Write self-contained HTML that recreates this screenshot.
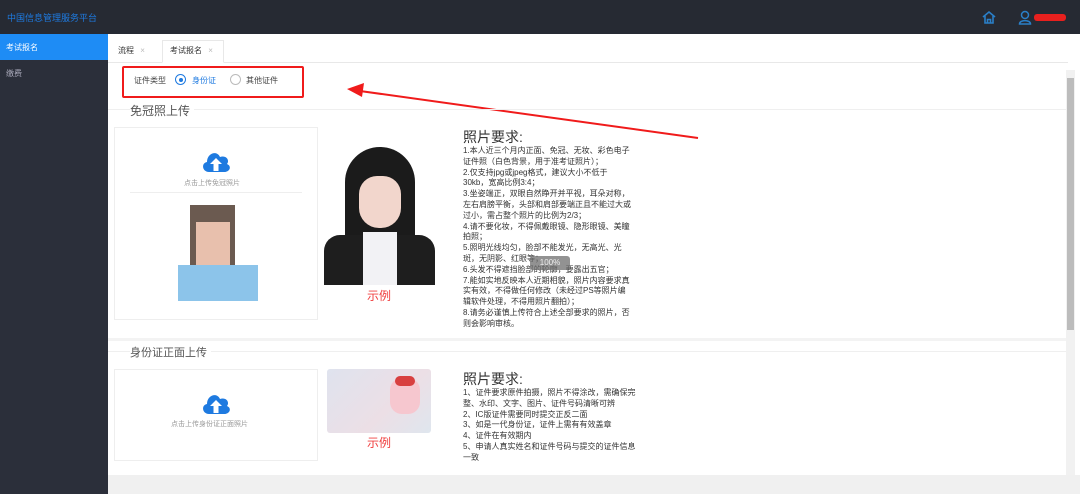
<!DOCTYPE html>
<html><head><meta charset="utf-8"><style>
*{margin:0;padding:0;box-sizing:border-box}
body{width:1080px;height:494px;overflow:hidden;background:#fff;font-family:"Liberation Sans","Noto Sans CJK SC",sans-serif;position:relative}
.a{position:absolute}
.req{font-size:8px;line-height:10.8px;color:#333}
.req h4{font-size:14px;font-weight:normal;line-height:17px;color:#333}
</style></head><body>
<div class="a" style="left:0;top:0;width:1080px;height:34px;background:#262a33"></div>
<div class="a" style="left:7px;top:11px;font-size:9px;color:#1e7ae0">中国信息管理服务平台</div>
<svg class="a" style="left:981px;top:10px" width="16" height="15" viewBox="0 0 16 15"><path d="M2 7 L8 2 L14 7 M4 6 V13 H12 V6 M6.5 13 V9.5 H9.5 V13" fill="none" stroke="#2a7fc8" stroke-width="1.6"/></svg>
<svg class="a" style="left:1018px;top:10px" width="14" height="15" viewBox="0 0 14 15"><circle cx="7" cy="5" r="3.5" fill="none" stroke="#2a7fc8" stroke-width="1.5"/><path d="M1.5 14 C1.5 9.5 12.5 9.5 12.5 14 Z" fill="none" stroke="#2a7fc8" stroke-width="1.5"/></svg>
<div class="a" style="left:1034px;top:14px;width:32px;height:7px;background:#e8201e;border-radius:3px"></div>
<div class="a" style="left:0;top:34px;width:108px;height:460px;background:#2b2f3a"></div>
<div class="a" style="left:0;top:34px;width:108px;height:26px;background:#1e8cf5"></div>
<div class="a" style="left:6px;top:42px;font-size:8px;color:#fff">考试报名</div>
<div class="a" style="left:6px;top:68px;font-size:8px;color:#aab">缴费</div>
<div class="a" style="left:108px;top:34px;width:972px;height:460px;background:#fff"></div>
<div class="a" style="left:108px;top:62px;width:960px;height:1px;background:#e8e8e8"></div>
<div class="a" style="left:118px;top:45px;font-size:8px;color:#333">流程 <span style="color:#bbb;margin-left:4px">×</span></div>
<div class="a" style="left:162px;top:40px;width:62px;height:23px;border:1px solid #e8e8e8;border-bottom:1px solid #fff;background:#fff"></div>
<div class="a" style="left:170px;top:45px;font-size:8px;color:#333">考试报名 <span style="color:#bbb;margin-left:4px">×</span></div>
<div class="a" style="left:122px;top:66px;width:182px;height:32px;border:2px solid #f01b1b;border-radius:2px"></div>
<div class="a" style="left:134px;top:75px;font-size:8px;color:#444">证件类型</div>
<div class="a" style="left:175px;top:74px;width:11px;height:11px;border:1px solid #1e7ae0;border-radius:50%"></div>
<div class="a" style="left:178.5px;top:77.5px;width:4px;height:4px;background:#1e7ae0;border-radius:50%"></div>
<div class="a" style="left:192px;top:75px;font-size:8px;color:#1e7ae0">身份证</div>
<div class="a" style="left:230px;top:74px;width:11px;height:11px;border:1px solid #bbb;border-radius:50%"></div>
<div class="a" style="left:246px;top:75px;font-size:8px;color:#444">其他证件</div>
<svg class="a" style="left:0;top:0" width="1080" height="494"><line x1="698" y1="138" x2="360" y2="91" stroke="#f01b1b" stroke-width="2"/><polygon points="347,89 364,83 362,97" fill="#f01b1b"/></svg>
<div class="a" style="left:108px;top:109px;width:958px;height:1px;background:#efefef"></div>
<div class="a" style="left:130px;top:102px;font-size:12px;color:#555;background:#fff;padding-right:4px">免冠照上传</div>
<div class="a" style="left:114px;top:127px;width:204px;height:193px;border:1px solid #eee"></div>
<svg class="a" style="left:201px;top:150px" width="30" height="22" viewBox="0 0 30 22"><path d="M8 22 C1 22 0 13 6 12 C6 3 16 0 19 7 C25 5 29 10 26 14 C31 16 29 22 23 22 Z" fill="#1e7ae0"/><path d="M15 8 L9 14 H12.5 V21 H17.5 V14 H21 Z" fill="#fff"/></svg>
<div class="a" style="left:184px;top:178px;font-size:7px;color:#999">点击上传免冠照片</div>
<div class="a" style="left:130px;top:192px;width:172px;height:1px;background:#eee"></div>
<div class="a" style="left:190px;top:205px;width:45px;height:65px;background:#6b5a50"></div>
<div class="a" style="left:196px;top:222px;width:34px;height:44px;background:#e8c0ad"></div>
<div class="a" style="left:178px;top:265px;width:80px;height:36px;background:#8cc4ea"></div>
<div class="a" style="left:324px;top:147px;width:111px;height:138px;background:#fff"></div>
<div class="a" style="left:345px;top:147px;width:70px;height:100px;background:#1b1b1b;border-radius:35px 35px 0 0"></div>
<div class="a" style="left:359px;top:176px;width:42px;height:52px;background:#f2d6cc;border-radius:18px 18px 20px 20px"></div>
<div class="a" style="left:324px;top:235px;width:111px;height:50px;background:#1e1e1e;border-radius:16px 16px 0 0"></div>
<div class="a" style="left:363px;top:232px;width:34px;height:53px;background:#f2f2f5"></div>
<div class="a" style="left:367px;top:287px;font-size:12px;color:#f04040">示例</div>
<div class="a req" style="left:463px;top:129px;width:168px">
<h4>照片要求:</h4>
1.本人近三个月内正面、免冠、无妆、彩色电子证件照（白色背景，用于准考证照片）；<br>2.仅支持jpg或jpeg格式，建议大小不低于30kb，宽高比例3:4；<br>3.坐姿端正，双眼自然睁开并平视，耳朵对称，左右肩膀平衡，头部和肩部要端正且不能过大或过小，需占整个照片的比例为2/3；<br>4.请不要化妆，不得佩戴眼镜、隐形眼镜、美瞳拍照；<br>5.照明光线均匀，脸部不能发光，无高光、光斑，无阴影、红眼等；<br>6.头发不得遮挡脸部的轮廓，要露出五官；<br>7.能如实地反映本人近期相貌，照片内容要求真实有效，不得做任何修改（未经过PS等照片编辑软件处理，不得用照片翻拍）；<br>8.请务必谨慎上传符合上述全部要求的照片，否则会影响审核。
</div>
<div class="a" style="left:530px;top:256px;width:40px;height:14px;background:rgba(110,110,110,.75);border-radius:3px;color:#eee;font-size:8px;text-align:center;line-height:14px">100%</div>
<div class="a" style="left:108px;top:338px;width:958px;height:3px;background:#f3f3f3"></div>
<div class="a" style="left:108px;top:351px;width:958px;height:1px;background:#efefef"></div>
<div class="a" style="left:130px;top:344px;font-size:11px;color:#555;background:#fff;padding-right:4px">身份证正面上传</div>
<div class="a" style="left:114px;top:369px;width:204px;height:92px;border:1px solid #eee"></div>
<svg class="a" style="left:201px;top:392px" width="30" height="22" viewBox="0 0 30 22"><path d="M8 22 C1 22 0 13 6 12 C6 3 16 0 19 7 C25 5 29 10 26 14 C31 16 29 22 23 22 Z" fill="#1e7ae0"/><path d="M15 8 L9 14 H12.5 V21 H17.5 V14 H21 Z" fill="#fff"/></svg>
<div class="a" style="left:171px;top:419px;font-size:7px;color:#999">点击上传身份证正面照片</div>
<div class="a" style="left:327px;top:369px;width:104px;height:64px;background:linear-gradient(135deg,#dfe3ee,#ecdfe6 60%,#dfe6ee);border-radius:3px"></div>
<div class="a" style="left:390px;top:378px;width:30px;height:36px;background:#f6c7cf;border-radius:12px"></div>
<div class="a" style="left:395px;top:376px;width:20px;height:10px;background:#d84040;border-radius:5px"></div>
<div class="a" style="left:367px;top:434px;font-size:12px;color:#f04040">示例</div>
<div class="a req" style="left:463px;top:371px;width:180px">
<h4>照片要求:</h4>
1、证件要求原件拍摄，照片不得涂改，需确保完整、水印、文字、图片、证件号码清晰可辨<br>2、IC版证件需要同时提交正反二面<br>3、如是一代身份证，证件上需有有效盖章<br>4、证件在有效期内<br>5、申请人真实姓名和证件号码与提交的证件信息一致
</div>
<div class="a" style="left:108px;top:475px;width:972px;height:19px;background:#f0f0f0"></div>
<div class="a" style="left:1066px;top:70px;width:9px;height:405px;background:#f1f1f1"></div>
<div class="a" style="left:1067px;top:78px;width:7px;height:252px;background:#bcbcbc"></div>
</body></html>
